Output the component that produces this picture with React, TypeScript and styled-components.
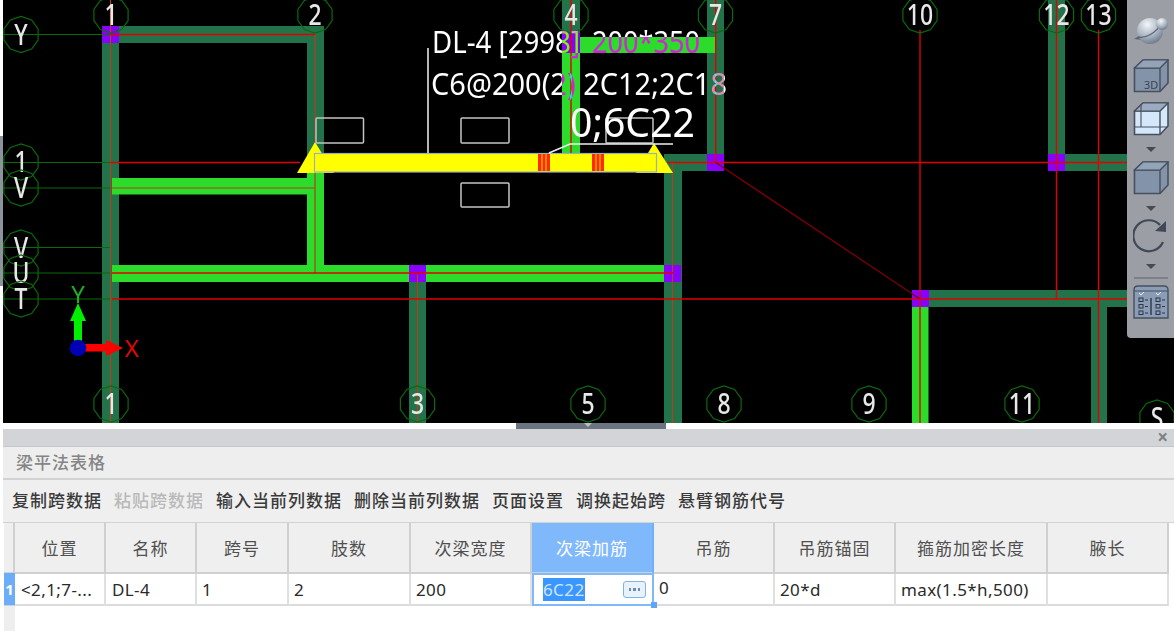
import React from 'react';
import styled, { createGlobalStyle } from 'styled-components';

const GlobalStyle = createGlobalStyle`
  html, body {
    margin: 0;
    padding: 0;
    width: 1174px;
    height: 631px;
    overflow: hidden;
    background: #ffffff;
    font-family: 'Noto Sans', 'Noto Sans CJK SC', sans-serif;
  }
`;

const Page = styled.div`
  display: flex;
  flex-direction: column;
  width: 1174px;
  height: 631px;
  overflow: hidden;
`;

const ViewRow = styled.div`
  display: flex;
  height: 423px;
`;

const Gutter = styled.div`
  width: 3px;
  padding-top: 136px;
  flex: none;
`;

const GutterMark = styled.div`
  height: 150px;
  background: #8d939b;
`;

const Viewport = styled.div`
  position: relative;
  flex: 1;
  background: #000000;
  overflow: hidden;
`;

const Drawing = styled.svg`
  display: block;
  width: 1171px;
  height: 423px;
  filter: blur(0.45px);
`;

const BubbleLabel = styled.text`
  font-family: 'Noto Sans', sans-serif;
  font-size: 28px;
  font-weight: 500;
  fill: #e8e8e8;
  text-anchor: middle;
`;

const NoteText = styled.text<{ $size: number; $plain?: boolean }>`
  font-family: 'Noto Sans', sans-serif;
  font-size: ${p => p.$size}px;
  fill: #ffffff;
  mix-blend-mode: ${p => (p.$plain ? 'normal' : 'difference')};
`;

const AxisLetter = styled.text<{ $color: string }>`
  font-family: 'Noto Sans', sans-serif;
  font-size: 24px;
  fill: ${p => p.$color};
  text-anchor: middle;
`;

const ToolRail = styled.div`
  position: absolute;
  top: 0;
  right: 0;
  width: 47px;
  height: 338px;
  box-sizing: border-box;
  display: flex;
  flex-direction: column;
  align-items: center;
  background: #9b9ea4;
  border-bottom-left-radius: 4px;
  padding-top: 15px;
`;

const ToolIcon = styled.svg<{ $after?: number }>`
  display: block;
  flex: none;
  margin-bottom: ${p => p.$after ?? 0}px;
  filter: blur(0.3px);
`;

const Caret = styled.div`
  flex: none;
  width: 0;
  height: 0;
  border-left: 5px solid transparent;
  border-right: 5px solid transparent;
  border-top: 5px solid #454b55;
  margin: 11px 0 8px;
`;

const RailDivider = styled.div`
  flex: none;
  width: 34px;
  height: 2px;
  background: #7c7f85;
  margin-bottom: 5px;
`;

const Splitter = styled.div`
  height: 6px;
  flex: none;
  padding-left: 516px;
`;

const SplitHandle = styled.div`
  position: relative;
  width: 150px;
  height: 6px;
  background: #6b7581;
  &::after {
    content: '';
    position: absolute;
    left: 68px;
    top: 0;
    border-left: 4px solid transparent;
    border-right: 4px solid transparent;
    border-top: 4px solid #b9bec5;
  }
`;

const Panel = styled.div`
  flex: 1;
  margin-left: 3px;
  display: flex;
  flex-direction: column;
  color: #444444;
  font-family: 'Noto Sans', 'Noto Sans CJK SC', sans-serif;
`;

const PanelBar = styled.div`
  height: 17px;
  flex: none;
  display: flex;
  align-items: center;
  justify-content: flex-end;
  padding-right: 6px;
  background: #d2d4d8;
  border-bottom: 1px solid #c4c6c9;
`;

const CloseMark = styled.span`
  font-size: 19px;
  line-height: 17px;
  font-weight: 700;
  color: #7d8085;
`;

const TitleRow = styled.div`
  height: 33px;
  flex: none;
  box-sizing: border-box;
  display: flex;
  align-items: center;
  padding: 0 0 2px 13px;
  background: #eeeeee;
  border-bottom: 2px solid #d2d2d2;
  font-size: 17px;
  letter-spacing: 1px;
  font-weight: 500;
  color: #858585;
`;

const ActionRow = styled.div`
  height: 43px;
  flex: none;
  box-sizing: border-box;
  display: flex;
  align-items: center;
  gap: 12px;
  padding: 0 0 3px 9px;
  background: #efefef;
  border-bottom: 1px solid #d2d2d2;
`;

const ActionButton = styled.span<{ $disabled?: boolean }>`
  font-size: 17px;
  letter-spacing: 1px;
  font-weight: 500;
  white-space: nowrap;
  color: ${p => (p.$disabled ? '#b9b9b9' : '#3a3a3a')};
`;

const Grid = styled.div`
  margin-left: 1px;
  flex: 1;
  display: grid;
  grid-template-columns: 11px 91px 91px 92px 122px 121px 122px 121px 121px 152px 121px 5px;
  grid-template-rows: 51px 32px 1fr;
  background: #ffffff;
`;

const Corner = styled.div`
  background: #efefef;
  border-right: 2px solid #d0d0d0;
  border-bottom: 2px solid #d0d0d0;
  box-sizing: border-box;
`;

const HeadCell = styled.div<{ $active?: boolean }>`
  display: flex;
  align-items: center;
  justify-content: center;
  box-sizing: border-box;
  font-size: 17px;
  letter-spacing: 1px;
  white-space: nowrap;
  color: ${p => (p.$active ? '#ffffff' : '#505050')};
  background: ${p => (p.$active ? '#7fb9fb' : '#efefef')};
  border-right: 2px solid ${p => (p.$active ? '#6fb0f8' : '#d0d0d0')};
  border-bottom: 2px solid #d0d0d0;
`;

const RowHead = styled.div`
  background: #6badf8;
  color: #ffffff;
  font-size: 15px;
  font-weight: 700;
  display: flex;
  align-items: center;
  justify-content: center;
  box-sizing: border-box;
  margin-top: -1px;
  border-bottom: 1px solid #d0d0d0;
`;

const BodyCell = styled.div<{ $raised?: boolean; $inset?: number }>`
  display: flex;
  align-items: center;
  box-sizing: border-box;
  padding: 0 0 ${p => (p.$raised ? 3 : 0)}px ${p => p.$inset ?? 5}px;
  font-size: 17px;
  letter-spacing: 0.4px;
  white-space: nowrap;
  color: #2a2a2a;
  border-right: 2px solid #e0e0e0;
  border-bottom: 2px solid #dcdcdc;
`;

const EditorCell = styled.div`
  position: relative;
  box-sizing: border-box;
  margin: -1px 0 0 0;
  width: 122px;
  height: 33px;
  display: flex;
  align-items: center;
  justify-content: space-between;
  padding: 0 6px 0 9px;
  border: 2px solid #7fb9fb;
  background: #ffffff;
`;

const Selection = styled.span`
  background: #3a97ff;
  color: #cfe4ff;
  font-size: 17px;
  letter-spacing: 0.4px;
  line-height: 23px;
`;

const MoreButton = styled.span`
  width: 23px;
  height: 17px;
  box-sizing: border-box;
  display: flex;
  align-items: center;
  justify-content: center;
  gap: 2px;
  border: 1.5px solid #7fb3e6;
  border-radius: 3px;
  background: #e9f2fb;
`;

const Dot = styled.i`
  width: 2.5px;
  height: 2.5px;
  background: #6a8db0;
`;

const DragHandle = styled.span`
  position: absolute;
  right: -5px;
  bottom: -4px;
  width: 6px;
  height: 6px;
  background: #5ea6f5;
`;

const GutterCol = styled.div`
  background: #eeeeee;
`;

const BLANK = styled.div``;

const beamDark = '#23734a';
const beamBright = '#2bdc2b';
const purple = '#8a00ff';

// x, y, w, h
const darkBeams = [
  [102, 26, 17, 397],
  [102, 26, 222, 17],
  [307, 26, 17, 130],
  [409, 282, 17, 141],
  [664, 154, 18, 269],
  [664, 154, 60, 17],
  [707, 0, 17, 171],
  [1048, 0, 17, 171],
  [1048, 154, 90, 17],
  [920, 290, 218, 17],
  [1091, 290, 16, 133],
  [562, 0, 18, 34],
];

const brightBeams = [
  [307, 170, 17, 111],
  [112, 178, 203, 16.5],
  [112, 265, 552, 17],
  [580, 37, 135, 16],
  [562, 50, 18, 110],
  [912, 305, 16.5, 118],
];

const columns = [
  [102, 26],
  [409, 265],
  [664, 265],
  [562, 33],
  [707, 154],
  [1048, 154],
  [912, 290],
];

// x1, y1, x2, y2
const redLines = [
  [110, 34.5, 315, 34.5],
  [110, 162.5, 300, 162.5],
  [667, 162.5, 1138, 162.5],
  [112, 273, 673, 273],
  [112, 299, 1138, 299],
  [571, 0, 571, 154],
  [715.7, 0, 715.7, 162],
  [920, 30, 920, 423],
  [1056.5, 0, 1056.5, 299],
  [1098.5, 30, 1098.5, 423],
];

const mutedLines = [
  [110.5, 0, 110.5, 423],
  [315, 34, 315, 273],
  [112, 188, 315, 188],
  [417.5, 273, 417.5, 423],
  [672.5, 162, 672.5, 423],
];

const gridStubs = [34.5, 162.5, 188, 247.5, 273, 299];

const bubbles: [string, number, number][] = [
  ['1', 111, 15],
  ['2', 315, 15],
  ['4', 571, 15],
  ['7', 715.5, 15],
  ['10', 920, 15],
  ['12', 1056.5, 15],
  ['13', 1098.5, 15],
  ['1', 111, 404],
  ['3', 417.5, 404],
  ['5', 588, 404],
  ['8', 724, 404],
  ['9', 869, 404],
  ['11', 1022, 404],
  ['S', 1157, 418],
  ['Y', 21, 34.5],
  ['1', 21, 162],
  ['V', 21, 188],
  ['V', 21, 248],
  ['U', 21, 273],
  ['T', 21, 299],
];

const hollowBoxes = [
  [316, 118, 47.5, 25],
  [461, 118, 48, 25],
  [461, 183, 48, 24],
  [606, 118, 47, 25],
];

const decagon = (cx: number, cy: number, r: number) =>
  Array.from({ length: 10 }, (_, i) => {
    const a = (Math.PI * 2 * i) / 10 + Math.PI / 10;
    return `${(cx + r * Math.cos(a)).toFixed(1)},${(cy + r * Math.sin(a)).toFixed(1)}`;
  }).join(' ');

const Bubble: React.FC<{ label: string; x: number; y: number }> = ({ label, x, y }) => (
  <g>
    <polygon points={decagon(x, y, 18)} fill="none" stroke="#0b6a0b" strokeWidth="1.2" />
    <g transform={`translate(${x} ${y + 10}) scale(0.82 1)`}>
      <BubbleLabel>{label}</BubbleLabel>
    </g>
  </g>
);

const Hatch: React.FC<{ x: number }> = ({ x }) => (
  <g>
    <rect x={x} y={154} width={12} height={17} fill="#ff2a00" />
    <rect x={x + 3.4} y={154} width={1.2} height={17} fill="#ffc000" />
    <rect x={x + 7.4} y={154} width={1.2} height={17} fill="#ffc000" />
  </g>
);

const CadDrawing = () => (
  <Drawing viewBox="3 0 1171 423">
    {darkBeams.map(([x, y, w, h], i) => (
      <rect key={i} x={x} y={y} width={w} height={h} fill={beamDark} />
    ))}
    {brightBeams.map(([x, y, w, h], i) => (
      <rect key={i} x={x} y={y} width={w} height={h} fill={beamBright} />
    ))}
    {columns.map(([x, y], i) => (
      <rect key={i} x={x} y={y} width={x === 562 ? 18 : 17} height={y === 33 ? 20 : 17} fill={purple} />
    ))}
    {gridStubs.map(y => (
      <line key={y} x1={3} y1={y} x2={110} y2={y} stroke="#0b6a0b" strokeWidth="1.2" />
    ))}
    {mutedLines.map(([x1, y1, x2, y2], i) => (
      <line key={i} x1={x1} y1={y1} x2={x2} y2={y2} stroke="#b0401f" strokeWidth="1.2" />
    ))}
    {redLines.map(([x1, y1, x2, y2], i) => (
      <line key={i} x1={x1} y1={y1} x2={x2} y2={y2} stroke="#e00000" strokeWidth="1.4" />
    ))}
    <line x1={715.7} y1={162.5} x2={920} y2={299} stroke="#7c0000" strokeWidth="1.3" />

    {bubbles.map(([label, x, y], i) => (
      <Bubble key={i} label={label} x={x} y={y} />
    ))}

    <polygon points="315,142 297,173 334,173" fill="#ffff00" />
    <polygon points="654,143 636,173 673,173" fill="#ffff00" />
    <rect x={314.5} y={153.5} width={342} height={18.5} fill="#ffff00" stroke="#9ab0c0" strokeWidth="1.2" />
    <Hatch x={538} />
    <Hatch x={592} />

    {hollowBoxes.map(([x, y, w, h], i) => (
      <rect key={i} x={x} y={y} width={w} height={h} rx="1" fill="none" stroke="#c4c4c4" strokeWidth="1.5" />
    ))}
    <line x1={428} y1={48} x2={428} y2={153} stroke="#e4e4e4" strokeWidth="1.6" />
    <polyline points="549,153 570,144 673,144" fill="none" stroke="#efefef" strokeWidth="1.5" />

    <NoteText $size={30} x={432} y={53} textLength={148} lengthAdjust="spacingAndGlyphs">
      DL-4 [2998]
    </NoteText>
    <NoteText $size={30} x={592} y={53} textLength={108} lengthAdjust="spacingAndGlyphs">
      200*350
    </NoteText>
    <NoteText $size={30} x={431} y={95} textLength={296} lengthAdjust="spacingAndGlyphs">
      C6@200(2) 2C12;2C18
    </NoteText>
    <NoteText $plain $size={40} x={570} y={137} textLength={125} lengthAdjust="spacingAndGlyphs">
      0;6C22
    </NoteText>

    <rect x={74} y={319} width={8} height={22} fill="#00ee00" />
    <polygon points="78,303 70,321 86,321" fill="#00ee00" />
    <rect x={85} y={344} width={22} height={7.5} fill="#ff0000" />
    <polygon points="123,348 106,340 106,356" fill="#ff0000" />
    <circle cx={78} cy={348} r={8.3} fill="#0000b4" />
    <AxisLetter $color="#1fae1f" x={78} y={303}>Y</AxisLetter>
    <AxisLetter $color="#f00000" x={132} y={357}>X</AxisLetter>
  </Drawing>
);

const OrbitIcon = () => (
  <ToolIcon width="36" height="30" viewBox="0 0 36 30" $after={13}>
    <defs>
      <radialGradient id="ball" cx="0.4" cy="0.25" r="0.85">
        <stop offset="0" stopColor="#f4f6f9" />
        <stop offset="0.55" stopColor="#a9b3c1" />
        <stop offset="1" stopColor="#5f6b7c" />
      </radialGradient>
    </defs>
    <path d="M1 24 L8 20 L10 25 Z" fill="#5c6470" />
    <circle cx="17" cy="16" r="13" fill="url(#ball)" />
    <path d="M5 22 C12 24 23 18 29 8" fill="none" stroke="#5d6775" strokeWidth="1.4" />
    <circle cx="29" cy="9" r="6" fill="url(#ball)" />
  </ToolIcon>
);

const Cube: React.FC<{ glass?: boolean; children?: React.ReactNode }> = ({ glass, children }) => (
  <ToolIcon width="36" height="35" viewBox="0 0 36 35">
    <path d="M1.5 10 L10 2 H35 V25 L27 33.5 H1.5 Z" fill={glass ? '#d4e7fb' : '#8293aa'} stroke="#47505e" strokeWidth="1.6" />
    <path d="M1.5 10 H27 V33.5 M27 10 L35 2" fill="none" stroke="#47505e" strokeWidth="1.4" />
    <path d="M1.5 10 L10 2 H35 L27 10 Z" fill={glass ? '#9aabc2' : '#93a3b8'} stroke="#47505e" strokeWidth="1.2" />
    {children}
  </ToolIcon>
);

const RotateIcon = () => (
  <ToolIcon width="36" height="34" viewBox="0 1 36 34">
    <path d="M30 24 A15.5 15.5 0 1 1 27 7" fill="none" stroke="#3f4957" strokeWidth="2.2" />
    <polygon points="33,3 33,14 22,13" fill="#3f4957" />
  </ToolIcon>
);

const ChecklistIcon = () => (
  <ToolIcon width="36" height="36" viewBox="0 0 36 36">
    <path d="M1 6 Q1 2 5 2 H31 Q35 2 35 6 V34 H1 Z" fill="#8a9cb6" stroke="#47505e" strokeWidth="1.4" />
    <line x1="1" y1="7" x2="35" y2="7" stroke="#47505e" strokeWidth="1.2" />
    <line x1="18" y1="14" x2="18" y2="31" stroke="#2f3744" strokeWidth="1.4" />
    {[6, 23].map(x => (
      <g key={x} fill="none" stroke="#2f3744" strokeWidth="1">
        <path d={`M${x} 9 l2 2 l3 -3`} stroke="#e6edf6" />
        <rect x={x} y={14} width={4} height={3.5} />
        <rect x={x} y={20.5} width={4} height={3.5} />
        <rect x={x} y={27} width={4} height={3.5} />
        <path d={`M${x + 6} 16 h3 M${x + 6} 22.5 h3 M${x + 6} 29 h3`} />
      </g>
    ))}
  </ToolIcon>
);

const ViewTools = () => (
  <ToolRail>
    <OrbitIcon />
    <Cube>
      <text x="11" y="31" fontSize="11" fontFamily="'Noto Sans', sans-serif" fill="#39414d">3D</text>
    </Cube>
    <ToolIcon width="36" height="8" viewBox="0 0 36 8" />
    <Cube glass>
      <path d="M8 3 V26 H1.5 M8 26 H35" fill="none" stroke="#47505e" strokeWidth="1.1" />
    </Cube>
    <Caret />
    <Cube />
    <Caret />
    <RotateIcon />
    <Caret />
    <RailDivider />
    <ChecklistIcon />
  </ToolRail>
);

const headers = ['位置', '名称', '跨号', '肢数', '次梁宽度', '次梁加筋', '吊筋', '吊筋锚固', '箍筋加密长度', '腋长'];
const actions = ['复制跨数据', '粘贴跨数据', '输入当前列数据', '删除当前列数据', '页面设置', '调换起始跨', '悬臂钢筋代号'];

export default function App() {
  return (
    <Page>
      <GlobalStyle />
      <ViewRow>
        <Gutter>
          <GutterMark />
        </Gutter>
        <Viewport>
          <CadDrawing />
          <ViewTools />
        </Viewport>
      </ViewRow>
      <Splitter>
        <SplitHandle />
      </Splitter>
      <Panel>
        <PanelBar>
          <CloseMark>×</CloseMark>
        </PanelBar>
        <TitleRow>梁平法表格</TitleRow>
        <ActionRow>
          {actions.map(a => (
            <ActionButton key={a} $disabled={a === '粘贴跨数据'}>{a}</ActionButton>
          ))}
        </ActionRow>
        <Grid>
          <Corner />
          {headers.map(h => (
            <HeadCell key={h} $active={h === '次梁加筋'}>{h}</HeadCell>
          ))}
          <BLANK />
          <RowHead>1</RowHead>
          <BodyCell $inset={6}>&lt;2,1;7-...</BodyCell>
          <BodyCell $inset={6}>DL-4</BodyCell>
          <BodyCell>1</BodyCell>
          <BodyCell>2</BodyCell>
          <BodyCell>200</BodyCell>
          <EditorCell>
            <Selection>6C22</Selection>
            <MoreButton>
              <Dot />
              <Dot />
              <Dot />
            </MoreButton>
            <DragHandle />
          </EditorCell>
          <BodyCell $raised>0</BodyCell>
          <BodyCell>20*d</BodyCell>
          <BodyCell>max(1.5*h,500)</BodyCell>
          <BodyCell />
          <BLANK />
          <GutterCol />
        </Grid>
      </Panel>
    </Page>
  );
}
